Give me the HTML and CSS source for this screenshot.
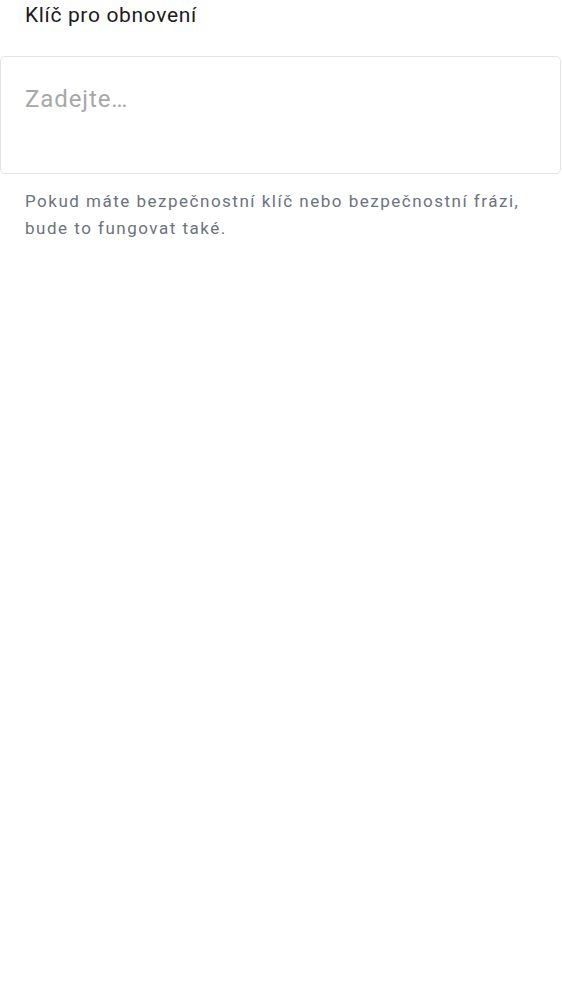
FILE: index.html
```html
<!DOCTYPE html>
<html lang="cs">
<head>
<meta charset="utf-8">
<link rel="stylesheet" href="styles.css">
</head>
<body>
<div class="field">
  <label class="label" for="key">Klíč pro obnovení</label>
  <textarea id="key" class="input" placeholder="Zadejte…"></textarea>
  <p class="help">Pokud máte bezpečnostní klíč nebo bezpečnostní frázi, bude to fungovat také.</p>
</div>
</body>
</html>
```
FILE: styles.css
```css
html, body {
  margin: 0;
  padding: 0;
  background: #fff;
}
body {
  font-family: Roboto, "Noto Sans", sans-serif;
}
.field {
  display: flex;
  flex-direction: column;
}
.label {
  padding: 0 25px;
  font-size: 21px;
  line-height: 30px;
  letter-spacing: 0.65px;
  color: #1b1b1b;
}
.input {
  margin: 26px 1px 0 0;
  height: 118px;
  box-sizing: border-box;
  border: 1px solid #e3e3e3;
  border-radius: 5px;
  padding: 27px 24px 20px;
  font-family: Roboto, "Noto Sans", sans-serif;
  font-size: 24px;
  line-height: 30px;
  letter-spacing: 0.9px;
  resize: none;
  outline: none;
}
.input::placeholder {
  color: #a8a8a8;
}
.help {
  margin: 14px 0 0;
  padding: 0 25px;
  font-size: 17px;
  line-height: 27px;
  color: #6b7280;
  letter-spacing: 1.5px;
}
```
